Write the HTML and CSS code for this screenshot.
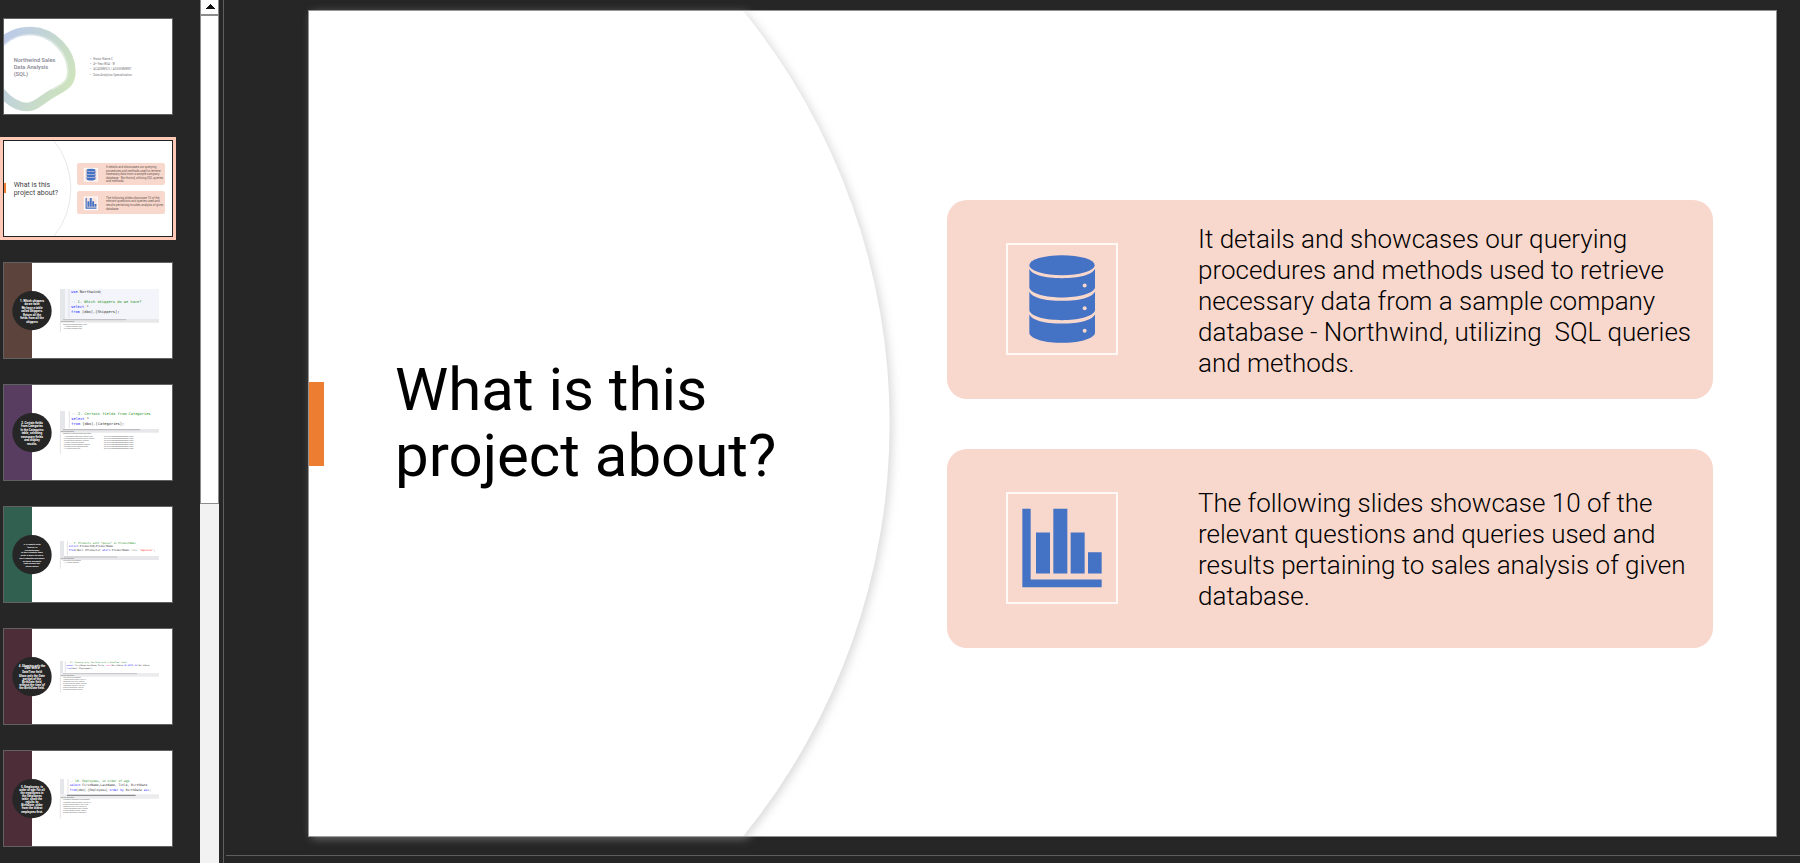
FILE: index.html
```html
<!DOCTYPE html>
<html lang="en">
<head>
<meta charset="utf-8">
<title>Northwind Sales Data Analysis (SQL)</title>
<link rel="stylesheet" href="styles.css">
</head>
<body>
<svg class="defs" aria-hidden="true">
  <defs>
    <symbol id="db" viewBox="6 6 324 321">
      <ellipse cx="168" cy="65" rx="98" ry="30"/>
      <path id="disk" d="M70 76C76 94 116 104 168 104S260 94 267 76V133C260 152 215 162 168 162S76 152 70 133Z"/>
      <use href="#disk" y="68"/>
      <use href="#disk" y="136"/>
      <g fill="#f8d7cc"><circle cx="236" cy="126" r="6"/><circle cx="236" cy="194" r="6"/><circle cx="236" cy="262" r="6"/></g>
    </symbol>
    <symbol id="chart" viewBox="6 6 324 321">
      <path d="M49 49H74V261H287V284H49ZM90 120H132V243H90ZM142 49H184V243H142ZM194 120H236V243H194ZM246 179H287V243H246Z"/>
    </symbol>
    <linearGradient id="ring" x1="0" y1="0.2" x2="1" y2="0.7">
      <stop offset="0" stop-color="#bccaea"/><stop offset="0.5" stop-color="#c3d6d3"/><stop offset="1" stop-color="#cee3bd"/>
    </linearGradient>
  </defs>
</svg>
<div class="app">
  <nav class="thumbs" aria-label="Slides">
    <button class="thumb" type="button">
      <svg viewBox="3 3 504 285">
        <path d="M-14 82C18 48 48 39 85 39C150 41 205 100 205 160C205 198 185 206 150 225C115 245 100 267 72 267C40 267 10 242 -10 218" fill="none" stroke="url(#ring)" stroke-width="26"/>
        <path d="M-4 90C22 62 48 52 85 52C145 54 193 106 193 160C193 190 178 196 145 213" fill="none" stroke="#fff" stroke-opacity=".35" stroke-width="9"/>
        <g class="t-title"><text x="32" y="132">Northwind Sales</text><text x="32" y="153">Data Analysis</text><text x="32" y="173">(SQL)</text></g>
        <g class="t-list"><text x="261" y="126">•</text><text x="271" y="126">Honor Name C</text><text x="261" y="141">•</text><text x="271" y="141">4ᵗʰ Year BSA - 'B'</text><text x="261" y="156">•</text><text x="271" y="156">ACADEMICS / ASSIGNMENT</text><text x="261" y="174">•</text><text x="271" y="174">Data Analytics Specialization</text></g>
      </svg>
    </button>
    <button class="thumb selected" type="button" aria-current="true">
      <svg viewBox="3 3 504 285">
        <path d="M151 0A228 228 0 0 1 151 291" fill="none" stroke="#e8e8e8" stroke-width="3"/>
        <path d="M0 129H9V159H0Z" fill="#ed7d31"/>
        <g class="t-head"><text x="32" y="140">What is this</text><text x="32" y="164">project about?</text></g>
        <g fill="#f8d7cc"><rect x="222" y="69" width="264" height="66" rx="7"/><rect x="222" y="153" width="264" height="69" rx="7"/></g>
        <g fill="#fae5de" stroke="#fff" stroke-width="3"><rect x="244" y="85" width="39" height="38"/><rect x="244" y="171" width="39" height="38"/></g>
        <g fill="#4472c4"><use href="#db" x="242" y="82" width="44" height="44"/><use href="#chart" x="242" y="168" width="44" height="44"/></g>
        <g class="t-body"><text x="309" y="84">It details and showcases our querying</text><text x="309" y="95">procedures and methods used to retrieve</text><text x="309" y="105">necessary data from a sample company</text><text x="309" y="116">database - Northwind, utilizing SQL queries</text><text x="309" y="127">and methods.</text>
        <text x="309" y="176">The following slides showcase 10 of the</text><text x="309" y="187">relevant questions and queries used and</text><text x="309" y="198">results pertaining to sales analysis of given</text><text x="309" y="209">database.</text></g>
      </svg>
    </button>
    <button class="thumb" type="button">
      <svg viewBox="3 3 504 285">
        <path d="M0 0H87V291H0Z" fill="#5c433b"/><circle cx="87" cy="146" r="59" fill="#262626"/>
        <g class="t-disc"><text x="87" y="120">1. Which shippers</text><text x="87" y="129">do we have</text><text x="87" y="141">We have a table</text><text x="87" y="151">called Shippers.</text><text x="87" y="162">Return all the</text><text x="87" y="171">fields from all the</text><text x="87" y="183">shippers</text></g>
        <path d="M171 81H468V171H171Z" fill="#f4f5fa"/><path d="M171 81H186V171H171Z" fill="#e5e6ea"/><path d="M171 171H468V182H171Z" fill="#e8e8ea"/><path d="M180 173H369" stroke="#bcbcc0" stroke-width="3"/><path d="M198 81V168M172 182V211" stroke="#d4d5dc" stroke-width="2"/>
        <g class="code c11"><text x="204" y="92"><tspan class="k">use</tspan> Northwind;</text><text class="c" x="204" y="122">-- 1. Which shippers do we have?</text><text x="204" y="138"><tspan class="k">select</tspan> *</text><text x="204" y="153"><tspan class="k">from</tspan> [dbo].[Shippers];</text></g>
        <g class="grid"><text x="173" y="180">Results  Messages</text><text x="180" y="188">ShipperID  CompanyName  Phone</text><text x="182" y="194">1   1   Speedy Express   (503)</text><text x="182" y="200">2   2   United Package   (503)</text></g>
      </svg>
    </button>
    <button class="thumb" type="button">
      <svg viewBox="3 3 504 285">
        <path d="M0 0H87V291H0Z" fill="#593d61"/><circle cx="87" cy="146" r="59" fill="#262626"/>
        <g class="t-disc"><text x="87" y="120">2. Certain fields</text><text x="87" y="129">from Categories</text><text x="87" y="141">In the Categories</text><text x="87" y="151">table, selecting</text><text x="87" y="162">necessary fields</text><text x="87" y="171">and display</text><text x="87" y="183">results.</text></g>
        <path d="M171 81H186V135H171Z" fill="#e5e6ea"/><path d="M171 135H468V146H171Z" fill="#e8e8ea"/><path d="M180 137H411" stroke="#b4b4b8" stroke-width="3"/><path d="M199 81V132M172 146V210" stroke="#d4d5dc" stroke-width="2"/>
        <g class="code c11"><text class="c" x="205" y="92">-- 2. Certain fields from Categories</text><text x="205" y="107"><tspan class="k">select</tspan>  *</text><text x="205" y="123"><tspan class="k">from</tspan> [dbo].[Categories];</text></g>
        <g class="grid"><text x="173" y="145">Results  Messages</text><text x="180" y="151">CategoryID  CategoryName  Description</text><text x="182" y="158">1    1     Beverages   Soft drinks, coffees, teas</text><text x="182" y="164">2    2     Condiments  Sweet and savory sauces</text><text x="182" y="170">3    3     Confections   Desserts, candies</text><text x="182" y="176">4    4     Dairy Products  Cheeses</text><text x="182" y="182">5    5     Grains/Cereals   Breads, crackers</text><text x="182" y="188">6    6     Meat/Poultry  Prepared meats</text><text x="182" y="194">7    7     Produce   Dried fruit</text>
        <text x="303" y="158">0x151C2F00020000000D000E00140021</text><text x="303" y="164">0x151C2F00020000000D000E00140021</text><text x="303" y="170">0x151C2F00020000000D000E00140021</text><text x="303" y="176">0x151C2F00020000000D000E00140021</text><text x="303" y="182">0x151C2F00020000000D000E00140021</text><text x="303" y="188">0x151C2F00020000000D000E00140021</text><text x="303" y="194">0x151C2F00020000000D000E00140021</text></g>
      </svg>
    </button>
    <button class="thumb" type="button">
      <svg viewBox="3 3 504 285">
        <path d="M0 0H87V291H0Z" fill="#315f50"/><circle cx="87" cy="146" r="59" fill="#262626"/>
        <g class="t-disc small"><text x="87" y="118">3. Products with</text><text x="87" y="127">“queso” in</text><text x="87" y="135">ProductName</text><text x="87" y="142">In the Products table</text><text x="87" y="150">write a query to show</text><text x="87" y="159">the ProductID and name</text><text x="87" y="168">of those products</text><text x="87" y="175">that include the</text><text x="87" y="184">string queso</text></g>
        <path d="M171 105H183V150H171Z" fill="#e5e6ea"/><path d="M171 150H468V162H171Z" fill="#e8e8ea"/><path d="M183 153H342" stroke="#cfcfd3" stroke-width="4"/><path d="M193 105V148M172 162V188" stroke="#d4d5dc" stroke-width="2"/>
        <g class="code c8"><text class="c" x="197" y="113">-- 7. Products with "queso" in ProductName</text><text x="197" y="124"><tspan class="k">select</tspan> ProductID,ProductName</text><text x="197" y="136"><tspan class="k">from</tspan>[dbo].[Products] <tspan class="k">where</tspan> ProductName <tspan class="g">like</tspan> <tspan class="s">'%queso%'</tspan>;</text></g>
        <g class="grid"><text x="173" y="159">Results  Messages</text><text x="180" y="166">ProductID  ProductName</text><text x="182" y="172">1   11   Queso Cabrales</text></g>
      </svg>
    </button>
    <button class="thumb" type="button">
      <svg viewBox="3 3 504 285">
        <path d="M0 0H87V291H0Z" fill="#4c2d38"/><circle cx="87" cy="146" r="59" fill="#262626"/>
        <g class="t-disc"><text x="87" y="116">4. Showing only the</text><text x="87" y="124">Date with a</text><text x="87" y="134">DateTime field</text><text x="87" y="146">Show only the Date</text><text x="87" y="155">portion of the</text><text x="87" y="164">BirthDate field,</text><text x="87" y="174">without the time of</text><text x="87" y="183">the BirthDate field.</text></g>
        <path d="M171 99H180V135H171Z" fill="#e5e6ea"/><path d="M171 135H468V146H171Z" fill="#ececee"/><path d="M180 137H402" stroke="#c4c4c8" stroke-width="3"/><path d="M187 99V133M172 146V193" stroke="#d4d5dc" stroke-width="2"/>
        <g class="code c6"><text class="c" x="190" y="106">-- 11. Showing only the Date with a DateTime field</text><text x="190" y="115"><tspan class="k">select</tspan> FirstName,LastName,Title, <tspan class="m">cast</tspan>(BirthDate <tspan class="k">AS DATE</tspan>) <tspan class="k">AS</tspan> BirthDate</text><text x="190" y="124"><tspan class="k">from</tspan>[dbo].[Employees];</text></g>
        <g class="grid"><text x="173" y="144">Results  Messages</text><text x="180" y="150">First   Last   Title      BirthDate</text><text x="180" y="156">1 Nancy  Davolio  Sales   1948-12</text><text x="180" y="162">2 Andrew  Fuller  Vice   1952-02</text><text x="180" y="168">3 Janet  Leverling  Sales  1963-08</text><text x="180" y="174">4 Margaret  Peacock   1937-09</text><text x="180" y="180">5 Steven  Buchanan   1955-03</text><text x="180" y="186">6 Michael  Suyama   1963-07</text></g>
      </svg>
    </button>
    <button class="thumb" type="button">
      <svg viewBox="3 3 504 285">
        <path d="M0 0H87V291H0Z" fill="#4c2d38"/><circle cx="87" cy="146" r="59" fill="#262626"/>
        <g class="t-disc"><text x="87" y="113">5. Employees, in</text><text x="87" y="122">order of age For all</text><text x="87" y="131">the employees in</text><text x="87" y="141">the Employees</text><text x="87" y="150">table, show the</text><text x="87" y="159">results by</text><text x="87" y="168">BirthDate, order</text><text x="87" y="177">from the oldest</text><text x="87" y="188">employees first.</text></g>
        <path d="M171 87H183V133H171Z" fill="#e5e6ea"/><path d="M171 133H468V146H171Z" fill="#ececee"/><path d="M192 136H398" stroke="#77777b" stroke-width="3"/><path d="M195 87V132M172 146V205" stroke="#d4d5dc" stroke-width="2"/>
        <g class="code c9"><text class="c" x="200" y="97">-- 10. Employees, in order of age</text><text x="200" y="109"><tspan class="k">select</tspan> FirstName,LastName, Title, BirthDate</text><text x="200" y="122"><tspan class="k">from</tspan>[dbo].[Employees] <tspan class="k">order by</tspan> BirthDate <tspan class="k">asc</tspan>;</text></g>
        <g class="grid"><text x="173" y="144">Results  Messages</text><text x="180" y="151">FirstName  LastName  Title         BirthDate</text><text x="180" y="158">1   Margaret   Peacock   Sales   1937-09-19</text><text x="180" y="164">2   Nancy   Davolio   Sales   1948-12-08</text><text x="180" y="171">3   Andrew   Fuller   Vice   1952-02-19</text><text x="180" y="178">4   Steven   Buchanan   Sales   1955-03</text><text x="180" y="184">5   Laura   Callahan   Inside   1958-01</text><text x="180" y="190">6   Robert   King   Sales   1960-05-29</text></g>
      </svg>
    </button>
  </nav>
  <div class="scrollbar">
    <button class="scroll-up" type="button" aria-label="Scroll up"><svg viewBox="0 0 10 5" shape-rendering="crispEdges"><path d="M5 0L10 5H0Z" fill="#111"/></svg></button>
    <div class="scroll-thumb"></div>
  </div>
  <main class="editor">
    <section class="slide">
      <svg class="arc" viewBox="0 0 1469 827" preserveAspectRatio="none" aria-hidden="true"><path d="M0 0H435A657 657 0 0 1 435 827H0Z" fill="#fff"/></svg>
      <div class="accent"></div>
      <h1>What is this<br>project about?</h1>
      <div class="cards">
        <article class="card">
          <div class="icon"><svg fill="#4472c4" aria-hidden="true"><use href="#db"/></svg></div>
          <p>It details and showcases our querying<br>procedures and methods used to retrieve<br>necessary data from a sample company<br>database - Northwind, utilizing&nbsp; SQL queries<br>and methods.</p>
        </article>
        <article class="card">
          <div class="icon"><svg fill="#4472c4" aria-hidden="true"><use href="#chart"/></svg></div>
          <p>The following slides showcase 10 of the<br>relevant questions and queries used and<br>results pertaining to sales analysis of given<br>database.</p>
        </article>
      </div>
    </section>
    <div class="notes"></div>
  </main>
</div>
</body>
</html>
```
FILE: styles.css
```css
* { box-sizing: border-box; }
body { margin: 0; background: #262626; font-family: Roboto, "Liberation Sans", sans-serif; }
.defs { position: absolute; width: 0; height: 0; }
.app { display: flex; height: 100vh; overflow: hidden; }

.thumbs { flex: none; width: 200px; padding: 18px 0 0 3px; display: flex; flex-direction: column; gap: 25px; overflow: hidden; }
.thumb { flex: none; display: block; width: 170px; height: 97px; padding: 0; border: 1px solid #616161; background: #fff; font-family: inherit; overflow: hidden; cursor: pointer; }
.thumb svg { display: block; width: 100%; height: 100%; }
.thumb.selected { border-color: #222; box-shadow: 0 0 0 3px #fecab7; }
.t-title { font-size: 17px; font-weight: 600; fill: #8d8d99; }
.t-list { font-size: 9px; fill: #77777d; }
.t-head { font-size: 21px; fill: #444; }
.t-body { font-size: 9px; fill: #6b5753; }
.t-disc { font-size: 9px; font-weight: 700; fill: #fff; text-anchor: middle; }
.t-disc.small { font-size: 7px; }
.code { font-family: "DejaVu Sans Mono", monospace; fill: #333; }
.c11 { font-size: 11px; }
.c9 { font-size: 9px; }
.c8 { font-size: 8px; }
.c6 { font-size: 6px; }
.code .k { fill: #22f; }
.code .c { fill: #2a932a; }
.code .s { fill: #f22; }
.code .m { fill: #f2f; }
.code .g { fill: #999; }
.grid { font-size: 5px; fill: #666; white-space: pre; }

.scrollbar { flex: none; width: 19px; display: flex; flex-direction: column; background: #f2f2f2; }
.scroll-up { flex: none; height: 14px; padding: 0 0 5px; border: solid #8c8c8c; border-width: 0 1px; background: #fff; display: flex; align-items: flex-end; justify-content: center; cursor: pointer; }
.scroll-up svg { width: 10px; height: 5px; }
.scroll-thumb { flex: none; height: calc(59% - 19px); border: 1px solid #8c8c8c; border-top-width: 2px; background: #fff; }

.editor { flex: 1; min-width: 0; margin-left: 4px; border-left: 1px solid #5e5e5e; padding-top: 10px; display: flex; flex-direction: column; }
.slide { position: relative; flex: none; aspect-ratio: 1469 / 827; margin: 0 23px 0 84px; padding-right: 63px; border: 1px solid #919191; background: #fff; display: flex; align-items: center; }
.arc { position: absolute; left: 0; top: 0; width: 100%; height: 100%; overflow: visible; filter: drop-shadow(3px 2px 5px rgba(185, 185, 185, 0.55)); }
.accent { position: relative; width: 15px; height: 84px; background: #ed7d31; }
h1 { position: relative; flex: 1; margin: 0; padding: 0 0 2px 71px; font-size: 60px; line-height: 66px; font-weight: 400; color: #000; white-space: nowrap; }
.cards { position: relative; flex: none; width: 766px; max-width: 55%; display: flex; flex-direction: column; gap: 50px; }
.card { display: flex; align-items: center; gap: 80px; min-height: 199px; padding: 20px 20px 20px 59px; border-radius: 20px; background: #f8d7cc; }
.icon { flex: none; width: 112px; height: 112px; border: 2px solid #fff8f5; }
.icon svg { display: block; width: 108px; height: 108px; }
.card p { margin: 0; padding-top: 4px; font-size: 26px; line-height: 31px; font-weight: 300; color: #000; white-space: nowrap; }
.notes { flex: 1; margin: 18px 0 0 2px; border-top: 1px solid #5e5e5e; }
```
